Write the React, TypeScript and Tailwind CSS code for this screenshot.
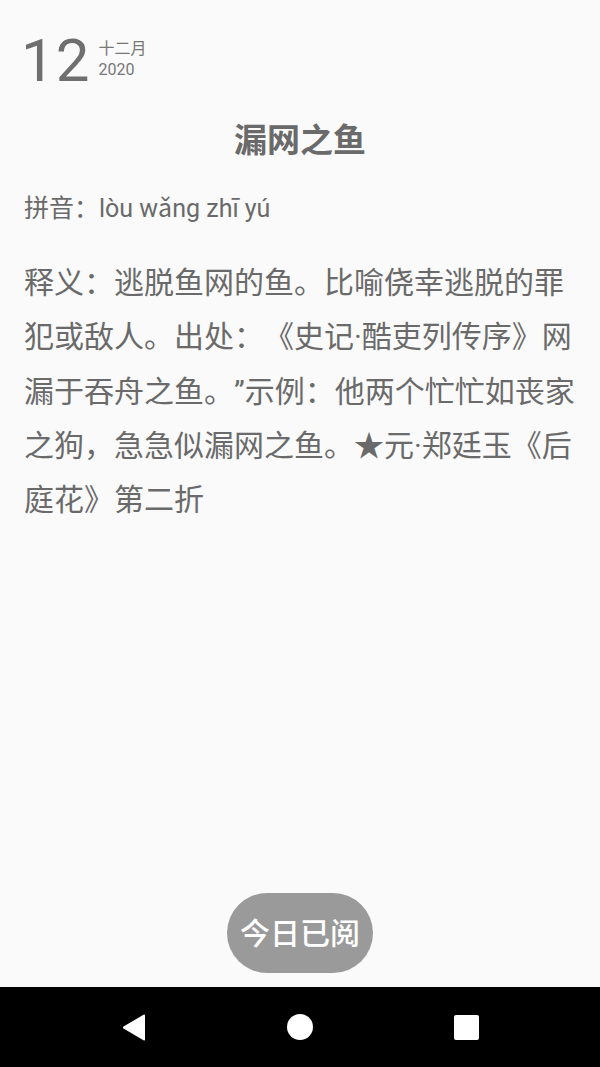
import React from "react";

const font = { fontFamily: 'Roboto, "Noto Sans CJK SC", sans-serif' };

export default function App() {
  return (
    <div
      className="w-[600px] h-[1067px] flex flex-col bg-[#fafafa] text-[#6a6a6a] overflow-hidden [text-spacing-trim:space-all]"
      style={font}
    >
      <div className="flex-1 flex flex-col">
        <div className="flex items-start pl-[21px] pt-[31px]">
          <div className="text-[60px] leading-[60px] font-normal text-[#6f6f6f] tracking-[1px]">12</div>
          <div className="ml-[8px] mt-[7px] flex flex-col text-[16px] leading-[21px] text-[#777]">
            <span>十二月</span>
            <span>2020</span>
          </div>
        </div>
        <div className="mt-[30px] text-center text-[33px] leading-[40px] font-bold text-[#6a6a6a]">漏网之鱼</div>
        <div className="mt-[32px] pl-6 text-[25px] leading-[32px] text-[#6a6a6a]">拼音：lòu wǎng zhī yú</div>
        <div className="mt-[31px] pl-6 pr-5 text-[30px] leading-[54.3px] text-[#6a6a6a]">
          释义：逃脱鱼网的鱼。比喻侥幸逃脱的罪犯或敌人。出处：《史记·酷吏列传序》网漏于吞舟之鱼。”示例：他两个忙忙如丧家之狗，急急似漏网之鱼。★元·郑廷玉《后庭花》第二折
        </div>
      </div>
      <div className="flex justify-center pb-[14px]">
        <div className="w-[146px] h-[80px] rounded-full bg-[#9a9a9a] flex items-center justify-center text-white text-[30px] font-medium">
          今日已阅
        </div>
      </div>
      <div className="h-[80px] bg-black flex items-center justify-between pl-[122px] pr-[121px]">
        <svg width="24" height="27" viewBox="0 0 24 27">
          <path d="M23 1.5 L23 25.5 Q23 27 21.5 26.2 L1.5 14.5 Q0.5 13.5 1.5 12.5 L21.5 0.8 Q23 0 23 1.5 Z" fill="white" />
        </svg>
        <div className="w-[26px] h-[26px] rounded-full bg-white" />
        <div className="w-[25px] h-[25px] rounded-[2px] bg-white" />
      </div>
    </div>
  );
}
